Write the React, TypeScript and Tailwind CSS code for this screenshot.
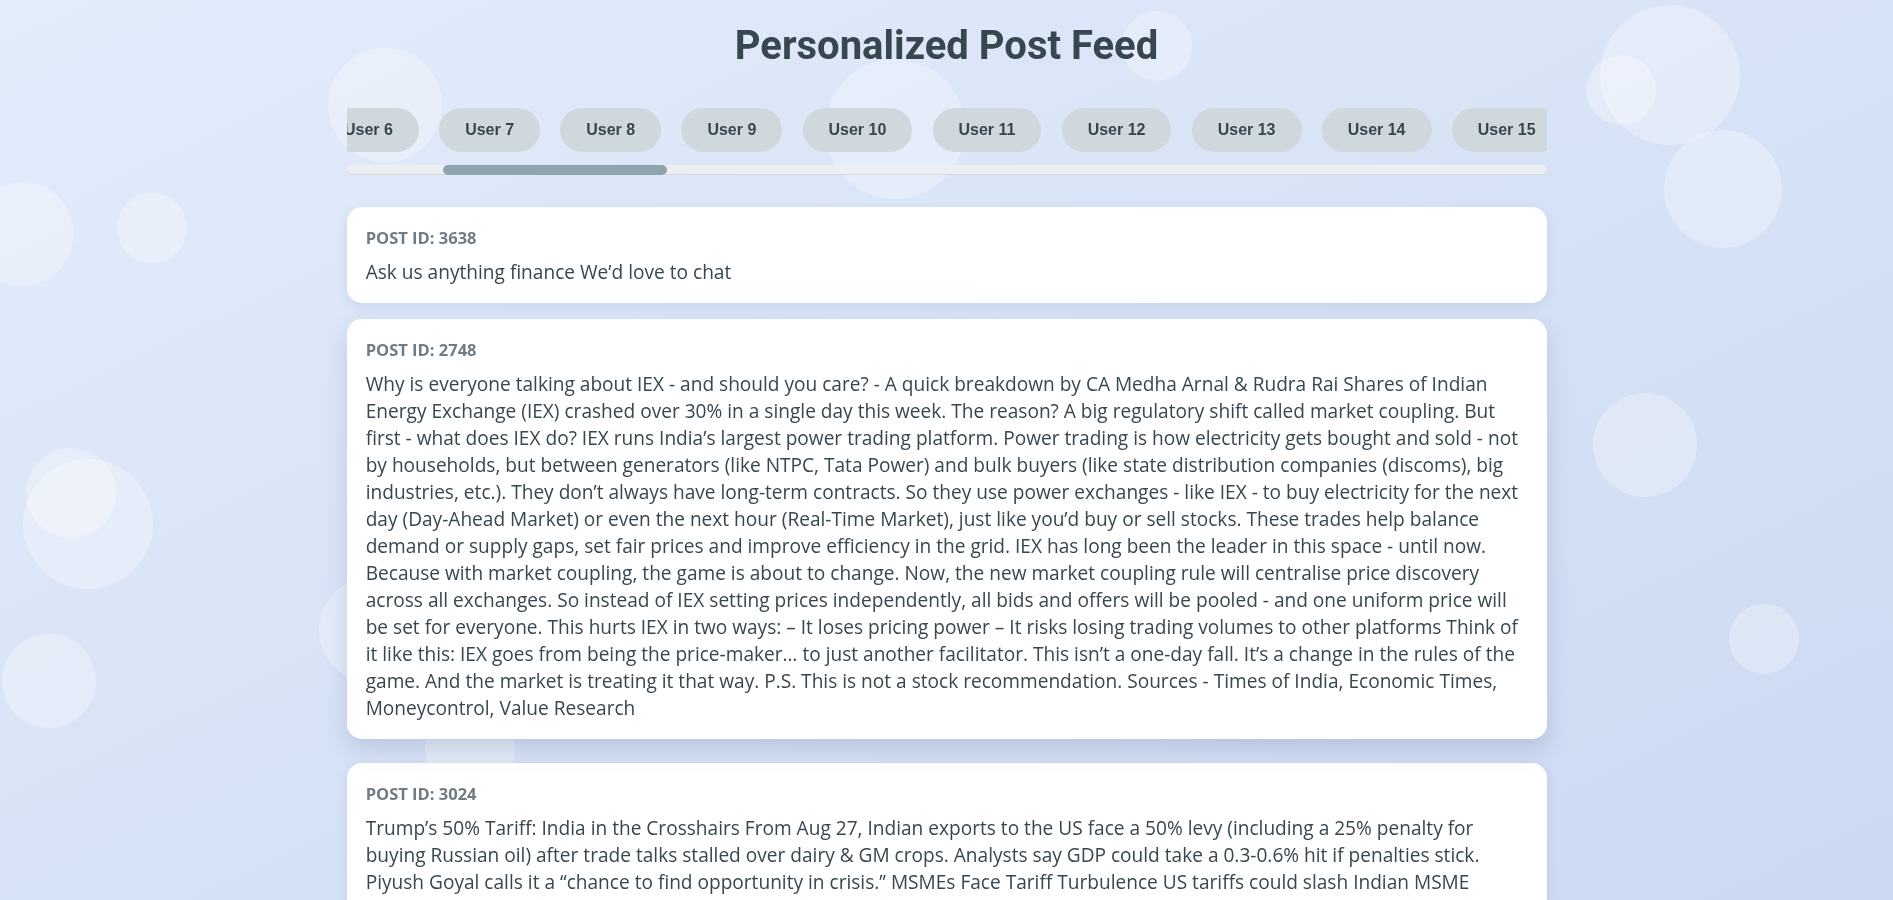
import React, { useEffect, useRef, useState } from 'react';

const POSTS = [
  { id: 3638, text: 'Ask us anything finance We’d love to chat' },
  {
    id: 2748,
    text:
      'Why is everyone talking about IEX - and should you care? - A quick breakdown by CA Medha Arnal & Rudra Rai Shares of Indian ' +
      'Energy Exchange (IEX) crashed over 30% in a single day this week. The reason? A big regulatory shift called market coupling. But ' +
      'first - what does IEX do? IEX runs India’s largest power trading platform. Power trading is how electricity gets bought and sold - not ' +
      'by households, but between generators (like NTPC, Tata Power) and bulk buyers (like state distribution companies (discoms), big ' +
      'industries, etc.). They don’t always have long-term contracts. So they use power exchanges - like IEX - to buy electricity for the next ' +
      'day (Day-Ahead Market) or even the next hour (Real-Time Market), just like you’d buy or sell stocks. These trades help balance ' +
      'demand or supply gaps, set fair prices and improve efficiency in the grid. IEX has long been the leader in this space - until now. ' +
      'Because with market coupling, the game is about to change. Now, the new market coupling rule will centralise price discovery ' +
      'across all exchanges. So instead of IEX setting prices independently, all bids and offers will be pooled - and one uniform price will ' +
      'be set for everyone. This hurts IEX in two ways: – It loses pricing power – It risks losing trading volumes to other platforms Think of ' +
      'it like this: IEX goes from being the price-maker… to just another facilitator. This isn’t a one-day fall. It’s a change in the rules of the ' +
      'game. And the market is treating it that way. P.S. This is not a stock recommendation. Sources - Times of India, Economic Times, ' +
      'Moneycontrol, Value Research',
  },
  {
    id: 3024,
    text:
      'Trump’s 50% Tariff: India in the Crosshairs From Aug 27, Indian exports to the US face a 50% levy (including a 25% penalty for ' +
      'buying Russian oil) after trade talks stalled over dairy & GM crops. Analysts say GDP could take a 0.3-0.6% hit if penalties stick. ' +
      'Piyush Goyal calls it a “chance to find opportunity in crisis.” MSMEs Face Tariff Turbulence US tariffs could slash Indian MSME ' +
      'exporters’ revenues by up to 40%, hitting textiles, gems & jewellery, leather and seafood the hardest.',
  },
];

const USERS = Array.from({ length: 50 }, (_, i) => i + 2);

const bubbles = [
  { x: 385, y: 105, r: 57 },
  { x: 1157, y: 46, r: 35 },
  { x: 895, y: 129, r: 70 },
  { x: 1670, y: 75, r: 70 },
  { x: 1621, y: 90, r: 35 },
  { x: 1723, y: 189, r: 59 },
  { x: 1645, y: 445, r: 52 },
  { x: 1764, y: 639, r: 35 },
  { x: 22, y: 234, r: 52 },
  { x: 152, y: 228, r: 35 },
  { x: 71, y: 493, r: 45 },
  { x: 88, y: 524, r: 65 },
  { x: 49, y: 681, r: 47 },
  { x: 372, y: 630, r: 53 },
  { x: 470, y: 750, r: 45 },
];

const App: React.FC = () => {
  const scroller = useRef<HTMLDivElement>(null);
  const target = useRef<HTMLButtonElement>(null);
  const [thumb, setThumb] = useState({ left: 0, width: 0 });

  const updateThumb = () => {
    const el = scroller.current;
    if (!el) return;
    const ratio = el.clientWidth / el.scrollWidth;
    setThumb({ left: el.scrollLeft * ratio, width: el.clientWidth * ratio });
  };

  useEffect(() => {
    if (scroller.current && target.current) {
      scroller.current.scrollLeft = target.current.offsetLeft + 28;
    }
    updateThumb();
  }, []);

  return (
    <div className="relative min-h-screen font-['Open_Sans',sans-serif]">
      {/* background with bubbles */}
      <div className="fixed inset-0 overflow-hidden bg-gradient-to-br from-[#e3ecfb] to-[#cbd9f1]">
        {bubbles.map((b, i) => (
          <div
            key={i}
            className="absolute rounded-full bg-white/30"
            style={{ left: b.x - b.r, top: b.y - b.r, width: b.r * 2, height: b.r * 2 }}
          />
        ))}
      </div>

      <div className="relative z-10 mx-auto max-w-[1200px] pt-[19px] pb-[40px]">
        <h1 className="text-center font-['Roboto',sans-serif] text-[40px] leading-[54px] font-bold text-[#37474f]">
          Personalized Post Feed
        </h1>

        <div className="mt-[35px]">
          <div
            ref={scroller}
            onScroll={updateThumb}
            className="relative flex gap-[20.2px] overflow-x-auto [scrollbar-width:none] [&::-webkit-scrollbar]:hidden"
          >
            {USERS.map((u) => (
              <button
                key={u}
                ref={u === 6 ? target : undefined}
                className="shrink-0 rounded-full bg-[#cfd8dc] px-[26px] py-[12.8px] font-['Liberation_Sans',Arial,sans-serif] text-[16px] leading-[18.4px] font-bold text-[#37474f]"
              >
                User {u}
              </button>
            ))}
          </div>
          <div className="relative mt-[12.5px] h-[10px] rounded-full bg-[#eceff1] shadow-[inset_0_-1px_0_#d3dade]">
            <div
              className="absolute top-0 h-[10px] rounded-full bg-[#90a4ae]"
              style={{ left: thumb.left, width: thumb.width }}
            />
          </div>
        </div>

        <div className="mt-[32.3px] flex flex-col gap-[20px]">
          {POSTS.map((p, i) => (
            <div
              key={p.id}
              className={
                i === 1
                  ? 'rounded-[15px] bg-white px-[19.2px] pt-[19.8px] pb-[17.2px] shadow-[0_10px_24px_rgba(60,80,120,0.18)] -translate-y-[4px]'
                  : 'rounded-[15px] bg-white px-[19.2px] pt-[19.8px] pb-[17.2px] shadow-[0_4px_12px_rgba(60,80,120,0.1)]'
              }
            >
              <div className="mb-[11px] text-[16.5px] leading-[21px] font-bold text-[#707c85] uppercase">
                Post ID: {p.id}
              </div>
              <p className="text-[19.1px] leading-[27px] text-[#37474f]">{p.text}</p>
            </div>
          ))}
        </div>
      </div>
    </div>
  );
};

export default App;
